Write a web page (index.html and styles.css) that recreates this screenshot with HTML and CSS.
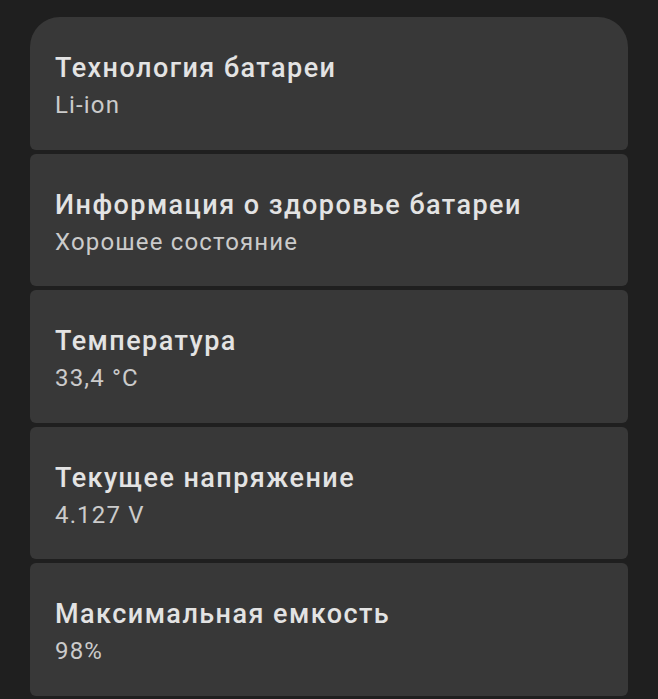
FILE: index.html
```html
<!DOCTYPE html>
<html lang="ru">
<head>
<meta charset="utf-8">
<link rel="stylesheet" href="styles.css">
</head>
<body>
<div class="list">
  <div class="card first">
    <div class="title">Технология батареи</div>
    <div class="value">Li-ion</div>
  </div>
  <div class="card">
    <div class="title">Информация о здоровье батареи</div>
    <div class="value">Хорошее состояние</div>
  </div>
  <div class="card">
    <div class="title">Температура</div>
    <div class="value">33,4 °C</div>
  </div>
  <div class="card">
    <div class="title">Текущее напряжение</div>
    <div class="value">4.127 V</div>
  </div>
  <div class="card">
    <div class="title">Максимальная емкость</div>
    <div class="value">98%</div>
  </div>
</div>
</body>
</html>
```
FILE: styles.css
```css
html, body {
  margin: 0;
  padding: 0;
  background: #1f1f1f;
  height: 100%;
  overflow: hidden;
}
body {
  font-family: Roboto, "Noto Sans", sans-serif;
}
.list {
  display: flex;
  flex-direction: column;
  gap: 4px;
  padding: 17px 30px 0 30px;
}
.card {
  background: #383838;
  border-radius: 6px;
  height: 132.5px;
  box-sizing: border-box;
  padding: 34px 25px 0 25px;
  display: flex;
  flex-direction: column;
}
.card.first {
  border-radius: 30px 30px 6px 6px;
}
.title {
  color: #e3e3e3;
  font-size: 27px;
  font-weight: 500;
  line-height: 34px;
  letter-spacing: 1.45px;
  white-space: nowrap;
}
.value {
  color: #cbcbcb;
  font-size: 24px;
  font-weight: 400;
  line-height: 40px;
  letter-spacing: 1.15px;
  white-space: nowrap;
}
```
